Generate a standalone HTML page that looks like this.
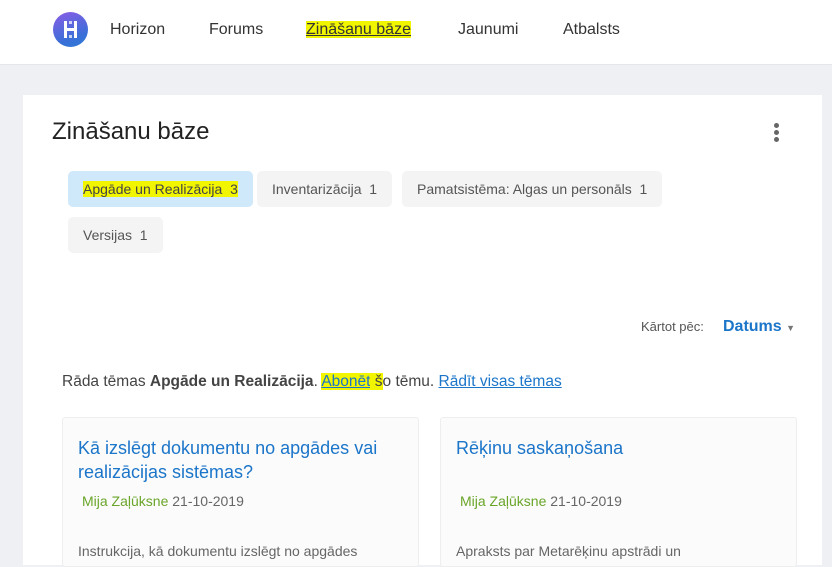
<!DOCTYPE html>
<html><head><meta charset="utf-8"><style>
*{box-sizing:border-box;margin:0;padding:0}
body{width:832px;height:553px;overflow:hidden;background:#eef0f4;font-family:"Liberation Sans",sans-serif;position:relative;color:#333}
.hdr{position:absolute;left:0;top:0;width:832px;height:65px;background:#fff;border-bottom:1px solid #e4e6ea}
.logo{position:absolute;left:53px;top:12px;width:35px;height:35px;border-radius:50%;background:linear-gradient(160deg,#8b5ce6,#3a6fd8 70%,#2d7bd6)}
.nav{position:absolute;top:21px;font-size:16px;color:#333}
.hl{background:#f2f500}
.card{position:absolute;left:23px;top:95px;width:799px;height:470px;background:#fff}
h1{position:absolute;left:52px;top:118px;font-size:24px;font-weight:normal;color:#222}
.dots{position:absolute;left:774px;top:123px}
.dots i{display:block;width:5px;height:5px;border-radius:50%;background:#666;margin-bottom:2px}
.chip{position:absolute;height:36px;border-radius:5px;background:#f4f4f4;font-size:14px;color:#555;line-height:36px;padding:0 15px}
.sort{position:absolute;left:641px;top:319px;font-size:13px;color:#555}
.dat{position:absolute;left:723px;top:318px;font-size:16px;color:#1b75c9;font-weight:bold}
.info{position:absolute;left:62px;top:373px;font-size:15.5px;color:#444}
.info a{color:#1b75c9;text-decoration:underline}
.tc{position:absolute;top:417px;width:357px;height:150px;background:#fbfbfb;border:1px solid #eee;border-radius:3px}
.tc h2{position:absolute;left:15px;top:18px;font-size:18px;font-weight:normal;color:#1b75c9;line-height:24px}
.tc .m{position:absolute;left:19px;top:75px;font-size:14px;color:#666}
.tc .m b{font-weight:normal;color:#6aa52a}
.tc .d{position:absolute;left:15px;top:125px;font-size:14px;color:#666;white-space:nowrap}
</style></head><body>
<div class="hdr">
<div class="logo"><svg width="35" height="35" viewBox="0 0 35 35"><g fill="#fff">
<rect x="11" y="9" width="3" height="17"/><rect x="21" y="9" width="3" height="17"/><rect x="14" y="16" width="7" height="3"/><rect x="16" y="9" width="3" height="3" opacity=".7"/><rect x="16" y="23" width="3" height="3" opacity=".7"/></g></svg></div>
<span class="nav" style="left:110px">Horizon</span>
<span class="nav" style="left:209px">Forums</span>
<span class="nav" style="left:306px;text-decoration:underline"><span class="hl">Zināšanu bāze</span></span>
<span class="nav" style="left:458px">Jaunumi</span>
<span class="nav" style="left:563px">Atbalsts</span>
</div>
<div class="card"></div>
<h1>Zināšanu bāze</h1>
<div class="dots"><i></i><i></i><i></i></div>
<div class="chip" style="left:68px;top:171px;background:#cfe8fa;color:#444"><span class="hl">Apgāde un Realizācija&nbsp; 3</span></div>
<div class="chip" style="left:257px;top:171px">Inventarizācija&nbsp; 1</div>
<div class="chip" style="left:402px;top:171px">Pamatsistēma: Algas un personāls&nbsp; 1</div>
<div class="chip" style="left:68px;top:217px">Versijas&nbsp; 1</div>
<div class="sort">Kārtot pēc:</div>
<div class="dat">Datums <span style="font-size:9px;color:#777">▼</span></div>
<div class="info">Rāda tēmas <b>Apgāde un Realizācija</b>. <a><span class="hl">Abonēt</span></a><span class="hl"> š</span>o tēmu. <a>Rādīt visas tēmas</a></div>
<div class="tc" style="left:62px"><h2>Kā izslēgt dokumentu no apgādes vai realizācijas sistēmas?</h2><div class="m"><b>Mija Zaļūksne</b> 21-10-2019</div><div class="d">Instrukcija, kā dokumentu izslēgt no apgādes</div></div>
<div class="tc" style="left:440px"><h2>Rēķinu saskaņošana</h2><div class="m"><b>Mija Zaļūksne</b> 21-10-2019</div><div class="d">Apraksts par Metarēķinu apstrādi un</div></div>
</body></html>
